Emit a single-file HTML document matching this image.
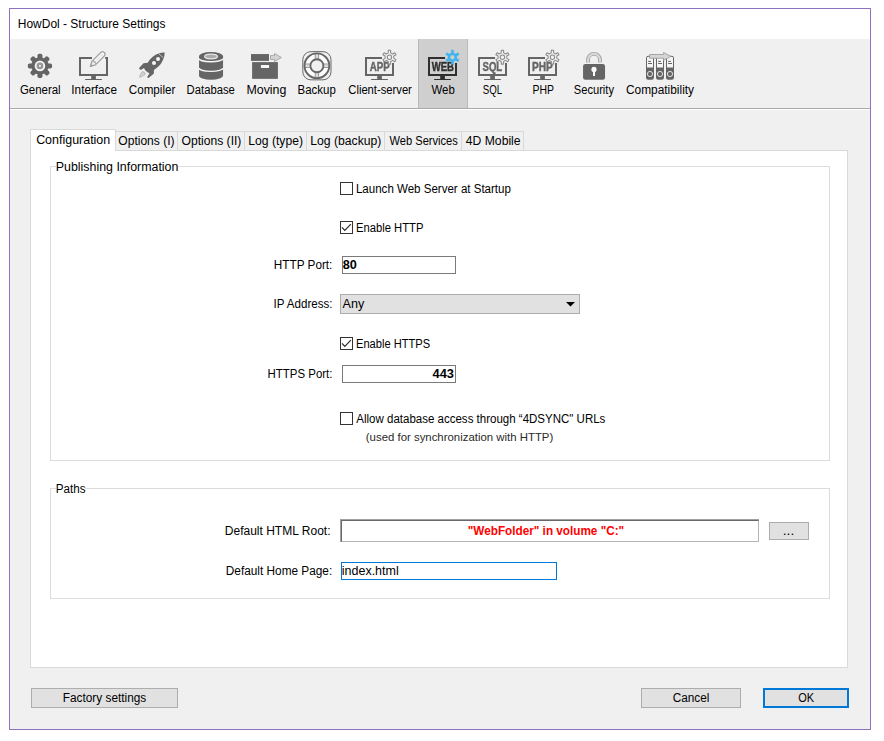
<!DOCTYPE html>
<html><head><meta charset="utf-8"><title>HowDol - Structure Settings</title>
<style>html,body{margin:0;padding:0;background:#fff;}
body{width:884px;height:741px;position:relative;overflow:hidden;font-family:"Liberation Sans",sans-serif;font-size:12px;color:#000;}
.abs,.t{position:absolute;}
.t{white-space:nowrap;transform-origin:0 0;}

.win{left:9px;top:8px;width:860px;height:720px;border:1px solid #8e72bc;background:#f0f0f0;}
.title{left:10px;top:9px;width:860px;height:30px;background:#fff;}
.tbsel{left:418px;top:39px;width:48px;height:69px;background:#cfcfcf;border-left:1px solid #b9b9b9;border-right:1px solid #b9b9b9;}
.tbline{left:10px;top:108px;width:860px;height:1px;background:#ababab;}
.tbline2{left:10px;top:109px;width:860px;height:1px;background:#fff;}
.pane{left:30px;top:150px;width:816px;height:516px;border:1px solid #d9d9d9;background:#fff;}
.tab{top:131px;height:18px;border:1px solid #d9d9d9;border-bottom:none;border-left:none;background:#f0f0f0;}
.tabsel{left:30px;top:129px;width:84px;height:20px;border:1px solid #d9d9d9;border-bottom:none;background:#fff;}
.grp{border:1px solid #dcdcdc;}
.lbg{background:#fff;height:14px;}
.cb{width:11px;height:11px;border:1px solid #333;background:#fff;}
.inp{border:1px solid #7a7a7a;background:#fff;}
.btn{border:1px solid #adadad;background:#e1e1e1;}
</style></head><body>
<div class="abs win"></div>
<div class="abs title"></div>
<div class="abs tbsel"></div>
<div class="abs tbline"></div><div class="abs tbline2"></div>
<div class="abs pane"></div>
<div class="abs tab" style="left:116px;width:61px;"></div>
<div class="abs tab" style="left:178px;width:66px;"></div>
<div class="abs tab" style="left:245px;width:61px;"></div>
<div class="abs tab" style="left:307px;width:77px;"></div>
<div class="abs tab" style="left:385px;width:76px;"></div>
<div class="abs tab" style="left:462px;width:61px;"></div>
<div class="abs tabsel"></div><div class="abs" style="left:31px;top:150px;width:84px;height:1px;background:#fff;"></div>
<div class="abs grp" style="left:50px;top:166px;width:778px;height:293px;"></div>
<div class="abs lbg" style="left:56px;top:160px;width:122px;"></div>
<div class="abs grp" style="left:50px;top:488px;width:778px;height:109px;"></div>
<div class="abs lbg" style="left:56px;top:482px;width:29px;"></div>
<div class="abs cb" style="left:340px;top:182px;"></div>
<div class="abs cb" style="left:340px;top:221px;"></div>
<div class="abs cb" style="left:340px;top:337px;"></div>
<div class="abs cb" style="left:340px;top:412px;"></div>
<div class="abs inp" style="left:342px;top:256px;width:112px;height:16px;"></div>
<div class="abs btn" style="left:340px;top:294px;width:238px;height:18px;"></div>
<div class="abs inp" style="left:342px;top:365px;width:112px;height:16px;"></div>
<div class="abs" style="left:340px;top:519px;width:418px;height:22px;border-top:1px solid #a0a0a0;border-left:1px solid #a0a0a0;"><div style="width:416px;height:20px;background:#fff;border:1px solid #b4b4b4;border-top-color:#696969;border-left-color:#696969;"></div></div>
<div class="abs btn" style="left:769px;top:522px;width:38px;height:16px;"></div>
<div class="abs inp" style="left:341px;top:562px;width:214px;height:16px;border-color:#0078d7;"></div>
<div class="abs btn" style="left:31px;top:688px;width:145px;height:18px;"></div>
<div class="abs btn" style="left:641px;top:688px;width:98px;height:18px;"></div>
<div class="abs btn" style="left:763px;top:688px;width:82px;height:16px;border:2px solid #0078d7;"></div>
<span class="t" style="left:17px;top:16px;font-size:12px;line-height:16px;transform:translateX(0.79px) scaleX(0.9978);">HowDol - Structure Settings</span>
<span class="t" style="left:19px;top:82px;font-size:12px;line-height:16px;transform:translateX(0.97px) scaleX(0.9529);">General</span>
<span class="t" style="left:71px;top:82px;font-size:12px;line-height:16px;transform:translateX(0.37px) scaleX(0.9757);">Interface</span>
<span class="t" style="left:128px;top:82px;font-size:12px;line-height:16px;transform:translateX(0.81px) scaleX(0.9695);">Compiler</span>
<span class="t" style="left:186px;top:82px;font-size:12px;line-height:16px;transform:translateX(0.62px) scaleX(0.9375);">Database</span>
<span class="t" style="left:246px;top:82px;font-size:12px;line-height:16px;transform:translateX(0.45px) scaleX(1.0328);">Moving</span>
<span class="t" style="left:297px;top:82px;font-size:12px;line-height:16px;transform:translateX(0.62px) scaleX(0.9533);">Backup</span>
<span class="t" style="left:348px;top:82px;font-size:12px;line-height:16px;transform:translateX(0.31px) scaleX(0.9341);">Client-server</span>
<span class="t" style="left:431px;top:82px;font-size:12px;line-height:16px;transform:translateX(0.50px) scaleX(0.9506);">Web</span>
<span class="t" style="left:482px;top:82px;font-size:12px;line-height:16px;transform:translateX(0.81px) scaleX(0.8055);">SQL</span>
<span class="t" style="left:532px;top:82px;font-size:12px;line-height:16px;transform:translateX(0.46px) scaleX(0.8705);">PHP</span>
<span class="t" style="left:573px;top:82px;font-size:12px;line-height:16px;transform:translateX(0.80px) scaleX(0.9275);">Security</span>
<span class="t" style="left:625px;top:82px;font-size:12px;line-height:16px;transform:translateX(0.98px) scaleX(0.9904);">Compatibility</span>
<span class="t" style="left:36px;top:132px;font-size:12px;line-height:16px;transform:translateX(0.13px) scaleX(1.0379);">Configuration</span>
<span class="t" style="left:118px;top:133px;font-size:12px;line-height:16px;transform:translateX(0.31px) scaleX(1.0040);">Options (I)</span>
<span class="t" style="left:181px;top:133px;font-size:12px;line-height:16px;transform:translateX(0.47px) scaleX(1.0097);">Options (II)</span>
<span class="t" style="left:248px;top:133px;font-size:12px;line-height:16px;transform:translateX(0.29px) scaleX(1.0112);">Log (type)</span>
<span class="t" style="left:310px;top:133px;font-size:12px;line-height:16px;transform:translateX(0.28px) scaleX(1.0155);">Log (backup)</span>
<span class="t" style="left:389px;top:133px;font-size:12px;line-height:16px;transform:translateX(0.50px) scaleX(0.9262);">Web Services</span>
<span class="t" style="left:465px;top:133px;font-size:12px;line-height:16px;transform:translateX(0.82px) scaleX(1.0132);">4D Mobile</span>
<span class="t" style="left:55px;top:159px;font-size:12px;line-height:16px;transform:translateX(0.78px) scaleX(1.0325);">Publishing Information</span>
<span class="t" style="left:355px;top:181px;font-size:12px;line-height:16px;transform:translateX(0.95px) scaleX(0.9612);">Launch Web Server at Startup</span>
<span class="t" style="left:355px;top:220px;font-size:12px;line-height:16px;transform:translateX(0.95px) scaleX(0.9363);">Enable HTTP</span>
<span class="t" style="left:273px;top:257px;font-size:12px;line-height:16px;transform:translateX(0.79px) scaleX(0.9799);">HTTP Port:</span>
<span class="t" style="left:342px;top:257px;font-size:12px;line-height:16px;transform:translateX(0.81px) scaleX(1.0585);font-weight:bold;">80</span>
<span class="t" style="left:273px;top:296px;font-size:12px;line-height:16px;transform:translateX(0.56px) scaleX(0.9633);">IP Address:</span>
<span class="t" style="left:342px;top:296px;font-size:12px;line-height:16px;transform:translateX(0.50px) scaleX(1.0484);">Any</span>
<span class="t" style="left:355px;top:336px;font-size:12px;line-height:16px;transform:translateX(0.95px) scaleX(0.9279);">Enable HTTPS</span>
<span class="t" style="left:267px;top:366px;font-size:12px;line-height:16px;transform:translateX(0.62px) scaleX(0.9524);">HTTPS Port:</span>
<span class="t" style="left:432px;top:366px;font-size:12px;line-height:16px;transform:translateX(0.49px) scaleX(1.0698);font-weight:bold;">443</span>
<span class="t" style="left:356px;top:411px;font-size:12px;line-height:16px;transform:translateX(0.33px) scaleX(0.9589);">Allow database access through “4DSYNC&quot; URLs</span>
<span class="t" style="left:365px;top:430px;font-size:10.67px;line-height:14px;transform:translateX(0.80px) scaleX(1.0694);color:#2a2a2a;">(used for synchronization with HTTP)</span>
<span class="t" style="left:55px;top:481px;font-size:12px;line-height:16px;transform:translateX(0.78px) scaleX(0.9711);">Paths</span>
<span class="t" style="left:224px;top:523px;font-size:12px;line-height:16px;transform:translateX(0.79px) scaleX(1.0010);">Default HTML Root:</span>
<span class="t" style="left:467px;top:523px;font-size:12px;line-height:16px;transform:translateX(0.80px) scaleX(0.9781);font-weight:bold;color:#ff0000;">&quot;WebFolder&quot; in volume &quot;C:&quot;</span>
<span class="t" style="left:782px;top:523px;font-size:12px;line-height:16px;transform:translateX(0.78px) scaleX(1.1506);">...</span>
<span class="t" style="left:225px;top:563px;font-size:12px;line-height:16px;transform:translateX(0.79px) scaleX(0.9850);">Default Home Page:</span>
<span class="t" style="left:341px;top:563px;font-size:12px;line-height:16px;transform:translateX(0.80px) scaleX(1.0407);">index.html</span>
<span class="t" style="left:62px;top:690px;font-size:12px;line-height:16px;transform:translateX(0.79px) scaleX(0.9848);">Factory settings</span>
<span class="t" style="left:672px;top:690px;font-size:12px;line-height:16px;transform:translateX(0.64px) scaleX(0.9826);">Cancel</span>
<span class="t" style="left:798px;top:690px;font-size:12px;line-height:16px;transform:translateX(0.31px) scaleX(0.9169);">OK</span>
<svg class="abs" style="left:0;top:0;will-change:transform" width="884" height="741" viewBox="0 0 884 741">
<g fill="#656565"><circle cx="39.95" cy="65.9" r="8.6"/>
<rect x="37.45" y="53.800000000000004" width="5" height="24.2" rx="1.7" transform="rotate(0 39.95 65.9)"/>
<rect x="37.45" y="53.800000000000004" width="5" height="24.2" rx="1.7" transform="rotate(45 39.95 65.9)"/>
<rect x="37.45" y="53.800000000000004" width="5" height="24.2" rx="1.7" transform="rotate(90 39.95 65.9)"/>
<rect x="37.45" y="53.800000000000004" width="5" height="24.2" rx="1.7" transform="rotate(135 39.95 65.9)"/>
<circle cx="39.95" cy="65.9" r="5.3" fill="#f3f3f3"/><circle cx="39.95" cy="65.9" r="3.3" fill="#969696"/><circle cx="39.95" cy="65.9" r="1.1" fill="#ededed"/></g>
<g fill="none" stroke="#656565" stroke-width="2">
<path d="M92,58 H80 V75 H107 V58 H105.2"/>
</g><rect x="85" y="78.9" width="17" height="1.2" rx="0.6" fill="#656565"/>
<rect x="91.2" y="75" width="4.7" height="4.4" fill="#656565"/>
<g transform="translate(90.1,66.7) rotate(-45)" fill="none">
<path d="M5.8,-2.9 L0.6,0 L5.8,2.9" stroke="#9e9e9e" stroke-width="1.3" stroke-linejoin="miter"/>
<path d="M0,0 L2.8,-1.5 L2.8,1.5 Z" fill="#9e9e9e"/>
<path d="M6.4,-2.5 H17.6 a2.5,2.5 0 0 1 0,5 H6.4 Z" fill="#f6f6f6" stroke="#a0a0a0" stroke-width="1.15"/>
<path d="M7,0 H17.5" stroke="#bdbdbd" stroke-width="0.8" stroke-dasharray="1.2 0.8"/>
</g>
<g>
<path d="M164.6,52.6 C161,52.4 157.4,53.5 153.4,56.3 C151,58 149,60.4 147.8,62.8 L143.5,63.3 L138.9,68.2 L140.6,69.9 L144.1,67.9 C144.3,69 145,70 145.7,70.8 C146.8,71.9 148.2,72.8 149.5,73.3 L147.1,77.2 L148.6,78.1 L153.9,73.5 L153.9,69.9 C156.5,68.6 160,65.5 161.7,62.6 C163.8,59 164.8,55.6 164.6,52.6 Z" fill="#656565"/>
<path d="M158.8,53.8 L163.4,57.7" stroke="#e4e4e4" stroke-width="0.7"/>
<circle cx="158.05" cy="59.1" r="2" fill="#f6f6f6"/><circle cx="154" cy="63.1" r="2" fill="#f6f6f6"/>
<path d="M142.5,71 C143.8,71 145.4,72.5 145.9,74.1 C144.4,76 141.6,77.5 139,77.9 C139.3,75.4 140.6,72.6 142.5,71 Z" fill="#bdbdbd"/>
<path d="M142.6,72.6 C143.4,72.8 144,73.4 144.3,74.2 C143.4,75.2 142.2,76 140.9,76.4 C141.1,75 141.7,73.6 142.6,72.6 Z" fill="#d6d6d6"/>
</g>
<g>
<path d="M199.05,56.5 V75.7 A12,4.1 0 0 0 223.05,75.7 V56.5 Z" fill="#656565"/>
<ellipse cx="211.05" cy="56.5" rx="12" ry="4.6" fill="#656565"/>
<path d="M199.05,58.5 A12,3.2 0 0 0 223.05,58.5" fill="none" stroke="#f6f6f6" stroke-width="1.35"/>
<path d="M199.05,68.1 A12,3.2 0 0 0 223.05,68.1" fill="none" stroke="#f6f6f6" stroke-width="1.35"/>
<ellipse cx="211.05" cy="56.5" rx="6.4" ry="2.35" fill="#aaaaaa" stroke="#e6e6e6" stroke-width="1.3"/>
</g>
<g fill="#656565">
<rect x="251" y="54.05" width="18" height="6.85"/>
<rect x="252.1" y="62.1" width="25.8" height="16.75"/>
<rect x="260.9" y="65" width="8.2" height="3" rx="0.5" fill="#f6f6f6"/>
<path d="M270.5,55.6 H274.5 V53.5 L281.4,57.5 L274.5,61.5 V59.4 H270.5 Z" fill="#d4d4d4" stroke="#a2a2a2" stroke-width="0.9" stroke-linejoin="miter"/>
</g>
<g fill="none">
<rect x="302.79999999999995" y="51.65" width="28.2" height="28.2" rx="8" stroke="#686868" stroke-width="1"/>
<circle cx="316.9" cy="65.75" r="9.8" stroke="#fdfdfd" stroke-width="5.4"/>
<path d="M316.9,53.35 V58.75 M316.9,78.15 V72.75 M304.5,65.75 H309.9 M329.29999999999995,65.75 H323.9" stroke="#9a9a9a" stroke-width="4.4"/>
<path d="M316.9,53.35 V58.75 M316.9,78.15 V72.75 M304.5,65.75 H309.9 M329.29999999999995,65.75 H323.9" stroke="#e0e0e0" stroke-width="2.3"/>
<path d="M316.9,53.35 V58.75 M316.9,78.15 V72.75 M304.5,65.75 H309.9 M329.29999999999995,65.75 H323.9" stroke="#cfcfcf" stroke-width="0.6"/>
<circle cx="316.9" cy="65.75" r="12.4" stroke="#656565" stroke-width="1.9"/>
<circle cx="316.9" cy="65.75" r="6.5" stroke="#656565" stroke-width="1.8"/>
</g>
<g>
<path d="M382,58 H366 V75 H393 V63" fill="none" stroke="#656565" stroke-width="2"/>
<rect x="377.2" y="75" width="4.7" height="4.4" fill="#656565"/>
<rect x="371" y="78.9" width="17" height="1.2" rx="0.6" fill="#656565"/>
<text x="369.7" y="70.8" font-family="Liberation Sans, sans-serif" font-weight="bold" font-size="12.6" textLength="20.0" lengthAdjust="spacingAndGlyphs" fill="#656565" stroke="#656565" stroke-width="0.45">APP</text>
<path d="M388.29,52.85 L388.25,50.30 L390.65,50.30 L390.61,52.85 L392.63,54.02 L394.82,52.71 L396.02,54.79 L393.80,56.04 L393.80,58.36 L396.02,59.61 L394.82,61.69 L392.63,60.38 L390.61,61.55 L390.65,64.10 L388.25,64.10 L388.29,61.55 L386.27,60.38 L384.08,61.69 L382.88,59.61 L385.10,58.36 L385.10,56.04 L382.88,54.79 L384.08,52.71 L386.27,54.02Z" fill="#f0f0f0" stroke="#8a8a8a" stroke-width="1.05" stroke-linejoin="round"/>
<circle cx="389.45" cy="57.2" r="2.2" fill="#f0f0f0" stroke="#8a8a8a" stroke-width="1.05"/>
</g>
<g>
<path d="M445,58 H429 V75 H456 V63" fill="none" stroke="#2f2f2f" stroke-width="2"/>
<rect x="440.2" y="75" width="4.7" height="4.4" fill="#2f2f2f"/>
<rect x="434" y="78.9" width="17" height="1.2" rx="0.6" fill="#2f2f2f"/>
<text x="431.8" y="70.8" font-family="Liberation Sans, sans-serif" font-weight="bold" font-size="12.6" textLength="22.2" lengthAdjust="spacingAndGlyphs" fill="#2f2f2f" stroke="#2f2f2f" stroke-width="0.45">WEB</text>
<path d="M451.29,52.85 L451.21,50.11 L453.69,50.11 L453.61,52.85 L455.63,54.02 L457.97,52.58 L459.21,54.73 L456.80,56.04 L456.80,58.36 L459.21,59.67 L457.97,61.82 L455.63,60.38 L453.61,61.55 L453.69,64.29 L451.21,64.29 L451.29,61.55 L449.27,60.38 L446.93,61.82 L445.69,59.67 L448.10,58.36 L448.10,56.04 L445.69,54.73 L446.93,52.58 L449.27,54.02Z" fill="#3db3ef" stroke="#3db3ef" stroke-width="0.3" stroke-linejoin="round"/>
<circle cx="452.45" cy="57.2" r="2.2" fill="#cfcfcf" stroke="#3db3ef" stroke-width="0.3"/>
</g>
<g>
<path d="M495,58 H479 V75 H506 V63" fill="none" stroke="#656565" stroke-width="2"/>
<rect x="490.2" y="75" width="4.7" height="4.4" fill="#656565"/>
<rect x="484" y="78.9" width="17" height="1.2" rx="0.6" fill="#656565"/>
<text x="482.6" y="70.8" font-family="Liberation Sans, sans-serif" font-weight="bold" font-size="12.6" textLength="19.6" lengthAdjust="spacingAndGlyphs" fill="#656565" stroke="#656565" stroke-width="0.45">SQL</text>
<path d="M501.29,52.85 L501.25,50.30 L503.65,50.30 L503.61,52.85 L505.63,54.02 L507.82,52.71 L509.02,54.79 L506.80,56.04 L506.80,58.36 L509.02,59.61 L507.82,61.69 L505.63,60.38 L503.61,61.55 L503.65,64.10 L501.25,64.10 L501.29,61.55 L499.27,60.38 L497.08,61.69 L495.88,59.61 L498.10,58.36 L498.10,56.04 L495.88,54.79 L497.08,52.71 L499.27,54.02Z" fill="#f0f0f0" stroke="#8a8a8a" stroke-width="1.05" stroke-linejoin="round"/>
<circle cx="502.45" cy="57.2" r="2.2" fill="#f0f0f0" stroke="#8a8a8a" stroke-width="1.05"/>
</g>
<g>
<path d="M545,58 H529 V75 H556 V63" fill="none" stroke="#656565" stroke-width="2"/>
<rect x="540.2" y="75" width="4.7" height="4.4" fill="#656565"/>
<rect x="534" y="78.9" width="17" height="1.2" rx="0.6" fill="#656565"/>
<text x="532.0" y="70.8" font-family="Liberation Sans, sans-serif" font-weight="bold" font-size="12.6" textLength="20.8" lengthAdjust="spacingAndGlyphs" fill="#656565" stroke="#656565" stroke-width="0.45">PHP</text>
<path d="M551.29,52.85 L551.25,50.30 L553.65,50.30 L553.61,52.85 L555.63,54.02 L557.82,52.71 L559.02,54.79 L556.80,56.04 L556.80,58.36 L559.02,59.61 L557.82,61.69 L555.63,60.38 L553.61,61.55 L553.65,64.10 L551.25,64.10 L551.29,61.55 L549.27,60.38 L547.08,61.69 L545.88,59.61 L548.10,58.36 L548.10,56.04 L545.88,54.79 L547.08,52.71 L549.27,54.02Z" fill="#f0f0f0" stroke="#8a8a8a" stroke-width="1.05" stroke-linejoin="round"/>
<circle cx="552.45" cy="57.2" r="2.2" fill="#f0f0f0" stroke="#8a8a8a" stroke-width="1.05"/>
</g>
<g>
<path d="M588,62.6 V59.9 a6,6 0 0 1 12,0 V62.6" fill="none" stroke="#a3a3a3" stroke-width="3.9"/>
<path d="M588,62.6 V59.9 a6,6 0 0 1 12,0 V62.6" fill="none" stroke="#d9d9d9" stroke-width="2.1"/>
<rect x="583.05" y="63.9" width="22" height="15.9" rx="2.3" fill="#656565"/>
<circle cx="594" cy="69.4" r="2.6" fill="#fafafa"/><rect x="593" y="70" width="2.05" height="5.9" rx="0.5" fill="#fafafa"/>
</g>
<g><path d="M646.5,68 V57.8 a1.5,1.5 0 0 1 1.5,-1.5 h4 a1.5,1.5 0 0 1 1.5,1.5 V68 Z" fill="#f5f5f5" stroke="#656565" stroke-width="1"/><path d="M646.0,67.9 h8 V77.6 a2.2,2.2 0 0 1 -2.2,2.2 h-3.6 a2.2,2.2 0 0 1 -2.2,-2.2 Z" fill="#656565"/><path d="M648.1,61.4 h2.9 M648.1,63.5 h3.9" stroke="#555" stroke-width="0.9"/><circle cx="650.00" cy="74" r="2.6" fill="none" stroke="#ececec" stroke-width="0.9"/><path d="M656.5,68 V57.8 a1.5,1.5 0 0 1 1.5,-1.5 h4 a1.5,1.5 0 0 1 1.5,1.5 V68 Z" fill="#f5f5f5" stroke="#656565" stroke-width="1"/><path d="M656.0,67.9 h8 V77.6 a2.2,2.2 0 0 1 -2.2,2.2 h-3.6 a2.2,2.2 0 0 1 -2.2,-2.2 Z" fill="#656565"/><path d="M658.1,61.4 h2.9 M658.1,63.5 h3.9" stroke="#555" stroke-width="0.9"/><circle cx="660.00" cy="74" r="2.6" fill="none" stroke="#ececec" stroke-width="0.9"/><path d="M666.5,68 V57.8 a1.5,1.5 0 0 1 1.5,-1.5 h4 a1.5,1.5 0 0 1 1.5,1.5 V68 Z" fill="#f5f5f5" stroke="#656565" stroke-width="1"/><path d="M666.0,67.9 h8 V77.6 a2.2,2.2 0 0 1 -2.2,2.2 h-3.6 a2.2,2.2 0 0 1 -2.2,-2.2 Z" fill="#656565"/><path d="M668.1,61.4 h2.9 M668.1,63.5 h3.9" stroke="#555" stroke-width="0.9"/><circle cx="670.00" cy="74" r="2.6" fill="none" stroke="#ececec" stroke-width="0.9"/><path d="M649.6,54.5 H663.6 V52.5 L670.8,56.4 L663.6,60.3 V58.2 H649.6 Z" fill="#d6d6d6" stroke="#9e9e9e" stroke-width="0.9" stroke-linejoin="miter"/></g>
<path d="M342,227.4 L344.8,230.4 L350.9,224.1" fill="none" stroke="#2a2a2a" stroke-width="1.2"/>
<path d="M342,343.4 L344.8,346.4 L350.9,340.1" fill="none" stroke="#2a2a2a" stroke-width="1.2"/>
<path d="M566,302 H575 L570.5,306.5 Z" fill="#000"/>
</svg>
</body></html>
